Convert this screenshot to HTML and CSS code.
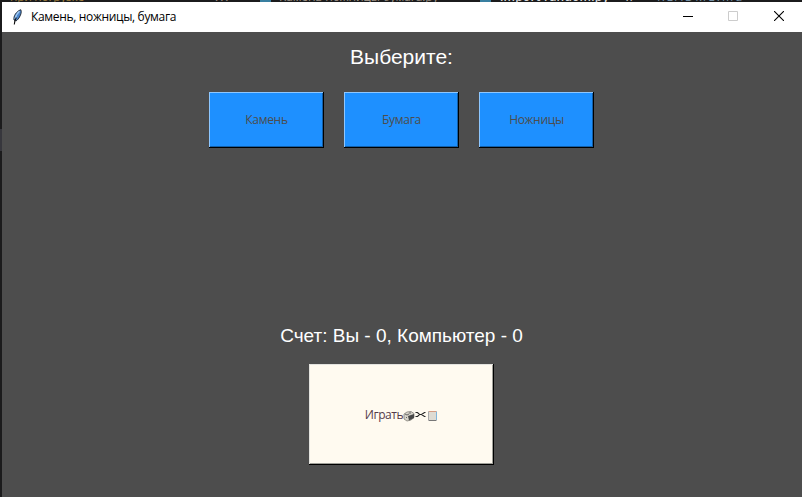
FILE: index.html
```html
<!DOCTYPE html>
<html lang="ru">
<head>
<meta charset="utf-8">
<title>Камень, ножницы, бумага</title>
<link rel="stylesheet" href="styles.css">
</head>
<body>
<div class="backdrop">
  <span class="tab tab-files">при погрузке</span>
  <span class="tab tab-dots">...</span>
  <i class="mark mark-one"></i>
  <span class="tab tab-game">Камень ножницы бумага.py</span>
  <i class="mark mark-two"></i>
  <span class="tab tab-module">import random.py</span>
  <span class="tab tab-close">x</span>
  <span class="tab tab-readme">README.md</span>
</div>
<div class="edge"></div>
<main class="window">
  <header class="titlebar">
    <svg class="feather" width="12" height="16" viewBox="0 0 12 16">
      <path d="M2 11C1.200 7.500 4 2.500 8.800.7c1 1.800.2 5-1.300 7.300-.7 1.500-1.700 2.700-3.500 4z" fill="#4c86cc" stroke="#1c222c" stroke-width=".9"/>
      <path d="M7.500 2.300C5 4.500 3.500 7.500 3.100 10" fill="none" stroke="#a5cdf4" stroke-width="1.200"/>
      <path d="M4.300 8.500C3.200 10.500 2.500 12.500 2.300 15.500" fill="none" stroke="#111" stroke-width="1.100"/>
    </svg>
    <h1 class="title">Камень, ножницы, бумага</h1>
    <div class="controls">
      <svg width="10" height="10" viewBox="0 0 10 10"><path d="M0 5.500h10" stroke="#000"/></svg>
      <svg width="10" height="10" viewBox="0 0 10 10"><path d="M.5.5h9v9h-9z" fill="none" stroke="#ccc"/></svg>
      <svg width="10" height="10" viewBox="0 0 10 10"><path d="M0 0l10 10M10 0L0 10" stroke="#000" stroke-width="1.100"/></svg>
    </div>
  </header>
  <section class="content">
    <p class="prompt">Выберите:</p>
    <div class="choices">
      <button class="choice"><span class="rock">Камень</span></button>
      <button class="choice"><span class="paper">Бумага</span></button>
      <button class="choice"><span class="scissors">Ножницы</span></button>
    </div>
    <p class="score">Счет: Вы - 0, Компьютер - 0</p>
    <button class="play"><span class="play-text">Играть</span>
      <svg class="glyphs" width="35" height="12" viewBox="0 0 35 12">
        <path d="M1 4l3-2 4-.5 3 2v4L8 10l-4 1-3-2z" fill="#d8d4ca" stroke="#827f79" stroke-width=".8"/>
        <path d="M5 6l6-2v4l-5 2.500z" fill="#484848"/>
        <path d="M2 4l2 1 2-1M3 7l1 1M6 3h2" fill="none" stroke="#666"/>
        <path d="M12.500 2.500h2l2 2h2l3-2h1M12.500 6.500h2l2-2h2l3 2h1" fill="none" stroke="#252525" stroke-width="1.100"/>
        <path d="M25.500 1.500h8v9h-8z" fill="#dedbd3" stroke="#aaa"/>
        <path d="M26 1.500h7" stroke="#d69b83"/><path d="M33.500 2v8" stroke="#80b5dc"/><path d="M26 10.500h7" stroke="#777"/>
      </svg>
    </button>
  </section>
</main>
</body>
</html>
```

FILE: styles.css
```css
* { box-sizing: border-box; }
body {
  margin: 0;
  width: 802px;
  height: 497px;
  overflow: hidden;
  display: grid;
  grid-template: 2px 495px / 2px 800px;
  background: #1b1b1c;
}
.backdrop {
  grid-column: 1 / 3;
  position: relative;
  height: 2px;
  overflow: hidden;
  font: 12px/14px "Open Sans", sans-serif;
  color: #9c9184;
}
.tab { position: absolute; top: -10px; white-space: nowrap; }
.tab-files { left: 10px; color: #9b7b3d; letter-spacing: -0.3px; }
.tab-dots { left: 215px; letter-spacing: 2px; }
.tab-game { left: 279px; letter-spacing: -0.15px; }
.tab-module { left: 500px; color: #ddd; font-weight: 600; letter-spacing: 0.2px; }
.tab-close { left: 626px; color: #ddd; }
.tab-readme { left: 657px; color: #7590a5; letter-spacing: 2px; }
.mark { position: absolute; top: 0; width: 11px; height: 2px; background: #397fa0; }
.mark-one { left: 260px; }
.mark-two { left: 480px; }
.edge { background: linear-gradient(#1b1b1c 127px, #37373d 127px 149px, #1b1b1c 149px); }
.window { display: flex; flex-direction: column; background: #4d4d4d; }
.titlebar {
  height: 30px;
  display: flex;
  align-items: center;
  padding: 0 18px 0 10px;
  background: #fff;
}
.feather { width: 12px; height: 16px; margin: -1px 7px 0 0; }
.title {
  margin: 0;
  font: 12px/16px "Open Sans", sans-serif;
  letter-spacing: -0.33px;
  color: #000;
  white-space: nowrap;
}
.controls { margin-left: auto; display: flex; gap: 35px; margin-top: -2px; }
.controls svg { display: block; }
.controls svg:first-child, .controls svg:nth-child(2) { margin-left: -1px; margin-right: 1px; }
.content { display: flex; flex-direction: column; align-items: center; padding: 13px 2px 0 0; }
.prompt, .score {
  margin: 0;
  padding-left: 1px;
  font: 21px/24px "Liberation Sans", sans-serif;
  color: #fff;
  white-space: nowrap;
}
.score { font-size: 19px; }
.choices { display: flex; gap: 20px; margin: 23px 0 176px; }
.choice, .play {
  display: flex;
  align-items: center;
  justify-content: center;
  padding: 0 0 0 1px;
  border: 0;
  font: 12px/16px "Open Sans", sans-serif;
  letter-spacing: -0.3px;
  color: #4d4d4d;
}
.choice {
  width: 115px;
  height: 56px;
  background: #1e90ff;
  box-shadow: inset -1px -1px #000, inset 1px 1px #8ec7ff, inset -2px -2px #1260aa;
}
.play {
  width: 185px;
  height: 101px;
  margin-top: 16px;
  letter-spacing: -0.4px;
  background: #fffaf0;
  color: #54394a;
  box-shadow: inset -1px -1px #000, inset 1px 1px #e3e3df, inset -2px -2px #a0a099;
}
.glyphs { display: block; margin-top: 3px; }
```
